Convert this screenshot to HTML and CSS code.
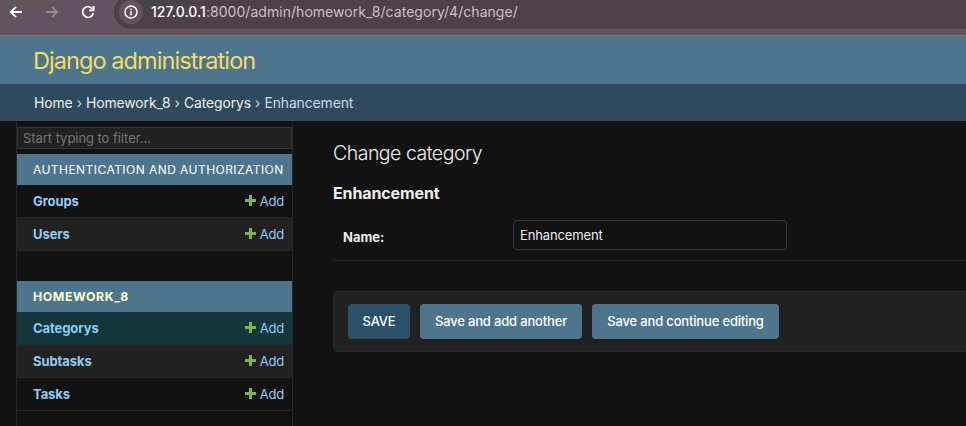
FILE: index.html
```html
<!DOCTYPE html>
<html lang="en">
<head>
<meta charset="utf-8">
<title>Change category | Django administration</title>
<link rel="stylesheet" href="styles.css">
</head>
<body>
<div class="toolbar">
  <svg class="nav-icon" viewBox="0 0 16 16"><path d="M14 8H3M8 2.8L2.8 8L8 13.2"/></svg>
  <svg class="nav-icon disabled" viewBox="0 0 16 16"><path d="M2 8h11M8 2.8L13.2 8L8 13.2"/></svg>
  <svg class="nav-icon" viewBox="0 0 16 16"><path d="M13.2 9A5.3 5.3 0 1 1 12 4.5L13.4 6M13.6 2v4.4H9.2"/></svg>
  <div class="address">
    <span class="info"><svg viewBox="0 0 14 14"><circle cx="7" cy="7" r="6"/><path d="M7 6.2v4M7 3.6v1.6"/></svg></span>
    <span class="url"><b>127.0.0.1</b>:8000/admin/homework_8/category/4/change/</span>
  </div>
</div>
<header class="header"><span>Django administration</span></header>
<nav class="breadcrumbs"><span><a>Home</a> › <a>Homework_8</a> › <a>Categorys</a> › Enhancement</span></nav>
<div class="main">
  <aside class="sidebar">
    <input class="filter" placeholder="Start typing to filter…">
    <section class="module">
      <h2><span>AUTHENTICATION AND AUTHORIZATION</span></h2>
      <div class="row"><b>Groups</b><a class="add"><svg viewBox="0 0 11 11"><path d="M4 0h3v4h4v3H7v4H4V7H0V4h4z"/></svg>Add</a></div>
      <div class="row even"><b>Users</b><a class="add"><svg viewBox="0 0 11 11"><path d="M4 0h3v4h4v3H7v4H4V7H0V4h4z"/></svg>Add</a></div>
    </section>
    <section class="module">
      <h2 class="current">HOMEWORK_8</h2>
      <div class="row selected"><b>Categorys</b><a class="add"><svg viewBox="0 0 11 11"><path d="M4 0h3v4h4v3H7v4H4V7H0V4h4z"/></svg>Add</a></div>
      <div class="row even"><b>Subtasks</b><a class="add"><svg viewBox="0 0 11 11"><path d="M4 0h3v4h4v3H7v4H4V7H0V4h4z"/></svg>Add</a></div>
      <div class="row"><b>Tasks</b><a class="add"><svg viewBox="0 0 11 11"><path d="M4 0h3v4h4v3H7v4H4V7H0V4h4z"/></svg>Add</a></div>
    </section>
  </aside>
  <main class="content">
    <h1>Change category</h1>
    <h2>Enhancement</h2>
    <div class="form-row"><label for="name">Name:</label><input id="name" value="Enhancement"></div>
    <div class="submit-row">
      <button class="save">SAVE</button>
      <button class="another">Save and add another</button>
      <button class="continue">Save and continue editing</button>
    </div>
  </main>
</div>
</body>
</html>
```

FILE: styles.css
```css
* { box-sizing: border-box; }
body { margin: 0; height: 426px; overflow: hidden; background: #121212; color: #eee; font: 13px/16px Inter, sans-serif; display: flex; flex-direction: column; }
h1, h2 { margin: 0; }
svg { display: block; }
input, button { font: inherit; }

.toolbar { flex: none; height: 36px; background: #62535e; border-bottom: 1px solid #82716f; display: flex; align-items: flex-start; padding-left: 8px; overflow: hidden; }
.nav-icon { flex: none; width: 16px; height: 16px; margin: 4px 20px 0 0; fill: none; stroke: #fff; stroke-width: 1.8; }
.nav-icon.disabled { stroke: #95898f; }
.address { flex: 1; margin: -5px -20px 0 -2px; height: 34px; border-radius: 17px; background: #4b4148; display: flex; align-items: center; padding-left: 5px; }
.info { width: 24px; height: 24px; border-radius: 50%; background: #62535e; display: flex; align-items: center; justify-content: center; margin-right: 8px; }
.info svg { width: 14px; height: 14px; fill: none; stroke: #fff; stroke-width: 1.5; }
.url { font-size: 14px; letter-spacing: .04px; color: #c8c1c5; white-space: nowrap; }
.url b { color: #fff; font-weight: 550; }

.header { flex: none; height: 48px; padding: 2px 0 0 33px; background: #4d768e; color: #f5dd5d; font-size: 23.5px; font-weight: 370; display: flex; align-items: center; letter-spacing: -.93px; }
.breadcrumbs { flex: none; height: 37px; padding-left: 34px; background: #304a5d; color: #c4dce8; font-size: 13.9px; font-weight: 400; letter-spacing: -.09px; word-spacing: .25px; display: flex; align-items: center; }
.breadcrumbs a { color: #eee; }

.main { flex: 1; display: flex; min-height: 0; }
.sidebar { flex: none; width: 277px; margin-left: 16px; border: solid #272727; border-width: 0 1px; padding-top: 6px; }
.filter { display: block; width: 275px; height: 22px; margin-bottom: 5px; padding: 0 5px; border: 1px solid #353535; background: #212121; color: #eee; letter-spacing: -.05px; }
.filter::placeholder { color: #757575; opacity: 1; }
.module { margin-bottom: 30px; }
.module h2 { height: 31px; padding-left: 16px; background: #4d768e; color: #fff; font-size: 12px; font-weight: 430; display: flex; align-items: center; letter-spacing: .45px; white-space: nowrap; }
.module .current { color: #ffffcc; font-weight: 700; font-size: 12.3px; letter-spacing: .6px; }
.row { height: 33px; border-bottom: 1px solid #272727; padding: 0 8px 0 16px; display: flex; align-items: center; justify-content: space-between; color: #8fcdf6; }
.row b { font-weight: 670; letter-spacing: -.08px; }
.even { background: #212121; }
.selected { background: #13363b; }
.add { display: flex; align-items: center; gap: 4px; letter-spacing: -.25px; }
.add svg { width: 11px; height: 11px; margin-top: -2px; fill: #7fb83b; }

.content { flex: 1; padding: 20px 0 0 40px; min-width: 0; }
.content h1 { font-size: 19.5px; line-height: 24px; font-weight: 350; letter-spacing: -.5px; }
.content h2 { font-size: 16px; line-height: 20px; font-weight: 700; letter-spacing: -.12px; margin: 18px 0 7px; }
.form-row { height: 51px; padding: 10px 0 0 10px; border-bottom: 1px solid #272727; display: flex; align-items: flex-start; }
.form-row label { width: 170px; padding-top: 9px; font-weight: 750; }
.form-row input { width: 274px; height: 30px; padding: 0 6px; border: 1px solid #353535; border-radius: 4px; background: #121212; color: #eee; letter-spacing: -.13px; }
.submit-row { height: 61px; margin: 30px -10px 0 0; padding: 12px 14px; border: 1px solid #272727; border-radius: 4px; background: #212121; display: flex; gap: 10px; }
button { height: 35px; padding: 0 0 1px; border: 0; border-radius: 4px; background: #4d768e; color: #fff; font-weight: 450; white-space: nowrap; letter-spacing: -.17px; }
.save { width: 62px; background: #2b5069; }
.another { width: 162px; }
.continue { width: 187px; }
```
